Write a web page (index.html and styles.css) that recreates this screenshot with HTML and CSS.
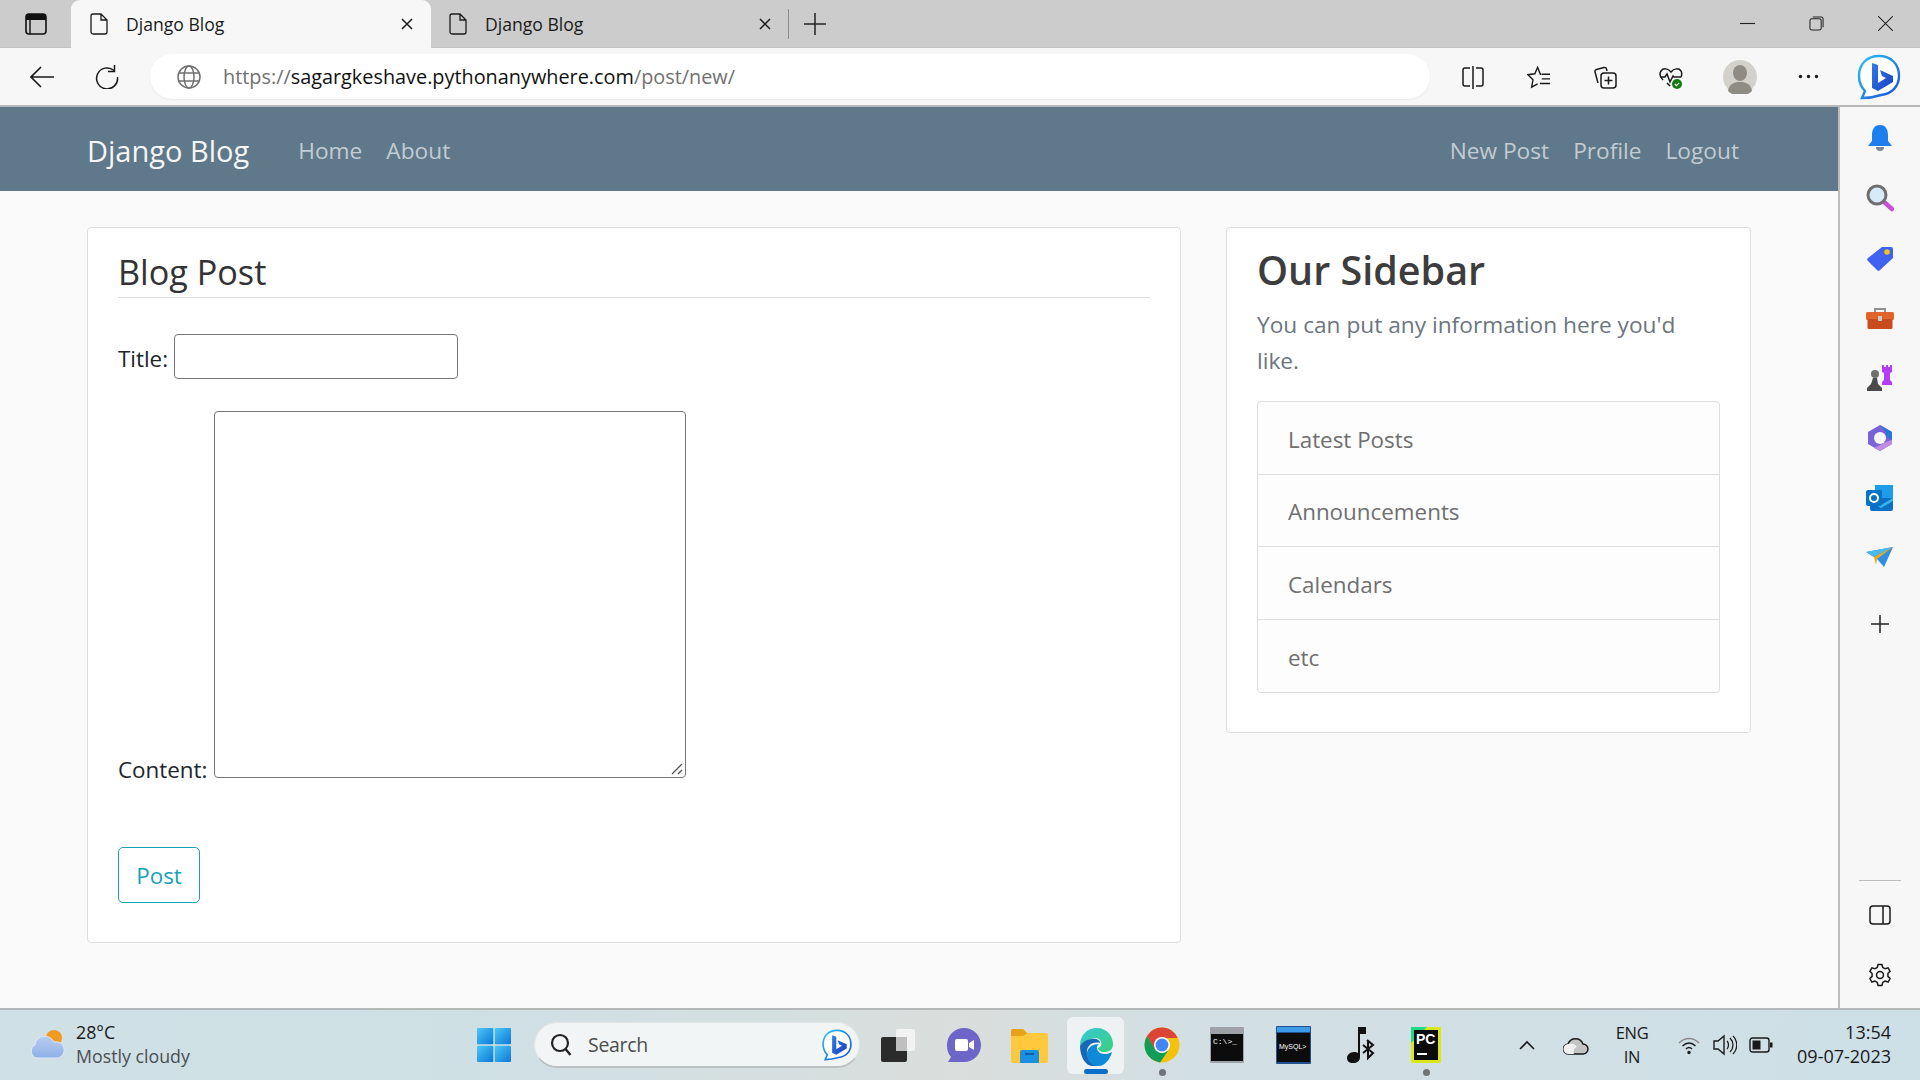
FILE: index.html
```html
<!DOCTYPE html>
<html lang="en">
<head>
<meta charset="utf-8">
<title>Django Blog</title>
<link rel="stylesheet" href="styles.css">
</head>
<body>
<svg class="defs" width="0" height="0">
  <defs>
    <linearGradient id="bingG" x1="0" y1="0" x2="1" y2="1"><stop offset="0" stop-color="#2cc4f0"/><stop offset="1" stop-color="#1a4fd8"/></linearGradient>
    <linearGradient id="bingB" x1="0" y1="0" x2="1" y2="1"><stop offset="0" stop-color="#2f7bea"/><stop offset="1" stop-color="#1b3fc4"/></linearGradient>
    <linearGradient id="edgeG" x1="0" y1="0" x2="1" y2="1"><stop offset="0" stop-color="#36c8d8"/><stop offset="1" stop-color="#3ad07c"/></linearGradient>
    <linearGradient id="winG" x1="0" y1="0" x2="1" y2="1"><stop offset="0" stop-color="#4cc8f5"/><stop offset="1" stop-color="#0a78d8"/></linearGradient>
    <linearGradient id="cloudG" x1="0" y1="0" x2="0" y2="1"><stop offset="0" stop-color="#b8cdf0"/><stop offset="1" stop-color="#8eb0e6"/></linearGradient>
    <symbol id="bing" viewBox="0 0 46 46">
      <path d="M23 2C11 2 3 10 3 22c0 7 3 12 6 15l-3 7c7 0 13-1 19-3 11-1 18-9 18-19C43 10 35 2 23 2Z" fill="#fff" stroke="url(#bingG)" stroke-width="2.4"/>
      <path d="M16 9l6 2v18l8-5-4-2-2-6 13 6v6l-15 9-6-3Z" fill="url(#bingB)"/>
    </symbol>
    <symbol id="doc" viewBox="0 0 18 22">
      <path d="M3 1h8l6 6v12a2 2 0 0 1-2 2H3a2 2 0 0 1-2-2V3a2 2 0 0 1 2-2Z M11 1v6h6" fill="none" stroke="#1a1a1a" stroke-width="1.3"/>
    </symbol>
    <symbol id="tabx" viewBox="0 0 14 14">
      <path d="M2 2l10 10M12 2 2 12" stroke="#1a1a1a" stroke-width="1.5" fill="none"/>
    </symbol>
  </defs>
</svg>
<div class="screen">
  <header class="tabbar">
    <svg class="ic-tabs" viewBox="0 0 22 22"><rect x="1" y="1" width="20" height="20" rx="3" fill="none" stroke="#111" stroke-width="1.6"/><path d="M1 4a3 3 0 0 1 3-3h14a3 3 0 0 1 3 3v3H1Z" fill="#111"/><path d="M5 7v14" stroke="#111" stroke-width="1.4"/></svg>
    <div class="tab tab-active">
      <svg class="ic-doc"><use href="#doc"/></svg>
      <span class="tab-title">Django Blog</span>
      <svg class="ic-tabx"><use href="#tabx"/></svg>
    </div>
    <div class="tab">
      <svg class="ic-doc"><use href="#doc"/></svg>
      <span class="tab-title">Django Blog</span>
      <svg class="ic-tabx"><use href="#tabx"/></svg>
    </div>
    <span class="tab-sep"></span>
    <svg class="ic-plus" viewBox="0 0 22 22"><path d="M11 0v22M0 11h22" stroke="#222" stroke-width="1.5"/></svg>
    <div class="winctl">
      <svg class="ic-win" viewBox="0 0 16 16"><path d="M0 8h16" stroke="#222" stroke-width="1.2"/></svg>
      <svg class="ic-win" viewBox="0 0 16 16"><rect x="1" y="3" width="12" height="12" rx="2" fill="none" stroke="#222" stroke-width="1.1"/><path d="M4 1h9a2 2 0 0 1 2 2v9" fill="none" stroke="#222" stroke-width="1.1"/></svg>
      <svg class="ic-win" viewBox="0 0 16 16"><path d="M0 0l16 16M16 0 0 16" stroke="#222" stroke-width="1.1"/></svg>
    </div>
  </header>

  <div class="toolbar">
    <svg class="ic-back" viewBox="0 0 24 22"><path d="M24 11H2M11 1 1 11l10 10" fill="none" stroke="#1a1a1a" stroke-width="1.6"/></svg>
    <svg class="ic-reload" viewBox="0 0 24 24"><path d="M19 5.5A10.5 10.5 0 1 0 22.5 12" fill="none" stroke="#1a1a1a" stroke-width="1.5"/><path d="M19.500 0v6.500H13" fill="none" stroke="#1a1a1a" stroke-width="1.5"/></svg>
    <div class="address">
      <svg class="ic-globe" viewBox="0 0 24 24"><g fill="none" stroke="#6f6f6f" stroke-width="1.5"><circle cx="12" cy="12" r="11"/><ellipse cx="12" cy="12" rx="5" ry="11"/><path d="M2 8h20M2 16h20"/></g></svg>
      <span class="url"><span class="url-dim">https://</span>sagargkeshave.pythonanywhere.com<span class="url-dim">/post/new/</span></span>
    </div>
    <div class="tools">
      <svg class="ic-tool" viewBox="0 0 24 24"><path d="M9 3H4a2 2 0 0 0-2 2v14a2 2 0 0 0 2 2h5M15 3h5a2 2 0 0 1 2 2v14a2 2 0 0 1-2 2h-5M12 1v23" fill="none" stroke="#1a1a1a" stroke-width="1.500"/></svg>
      <svg class="ic-tool" viewBox="0 0 26 24"><path d="M15.500 9H14.500L11.500 1.500 8.500 8.500 1 9.500l5.500 5.500L5 23l6.500-3.500" fill="none" stroke="#1a1a1a" stroke-width="1.500"/><path d="M16 9h9M16 14h9M14 19h11" stroke="#1a1a1a" stroke-width="1.500"/></svg>
      <svg class="ic-tool" viewBox="0 0 24 24"><path d="M5 18 2 7a2 2 0 0 1 1.500-2.500L11 2.500a2 2 0 0 1 2.500 1.500l.5 2" fill="none" stroke="#1a1a1a" stroke-width="1.500"/><rect x="8" y="8" width="15" height="15" rx="3" fill="#f7f7f7" stroke="#1a1a1a" stroke-width="1.500"/><path d="M15.500 11.500v8M11.500 15.500h8" stroke="#1a1a1a" stroke-width="1.500"/></svg>
      <svg class="ic-tool" viewBox="0 0 24 24"><path d="M4 15C1 12 0 9 2 6c2-3 7-3 10 1 3-4 8-4 10-1 1 2 1 4 0 6M1 12h5l2-3 3 8 3-6 1 1h7M8 18l3 3" fill="none" stroke="#1a1a1a" stroke-width="1.500"/><circle cx="18" cy="19" r="5" fill="#107c10"/><path d="M15.800 19l1.600 1.600 2.800-2.800" fill="none" stroke="#fff" stroke-width="1.200"/></svg>
      <svg class="ic-avatar" viewBox="0 0 34 34"><circle cx="17" cy="17" r="17" fill="#d3d1cc"/><ellipse cx="17" cy="13" rx="7" ry="8" fill="#8f8b85"/><path d="M5 31c1-7 6-9 12-9s11 2 12 9a17 17 0 0 1-24 0Z" fill="#8f8b85"/></svg>
      <svg class="ic-dots" viewBox="0 0 21 5"><circle cx="2.500" cy="2.500" r="1.700" fill="#1a1a1a"/><circle cx="10.500" cy="2.500" r="1.700" fill="#1a1a1a"/><circle cx="18.500" cy="2.500" r="1.700" fill="#1a1a1a"/></svg>
      <svg class="ic-bing-lg"><use href="#bing"/></svg>
    </div>
  </div>

  <div class="middle">
    <div class="page">
      <nav class="navbar">
        <a class="brand">Django Blog</a>
        <a class="navlink navlink-home">Home</a>
        <a class="navlink">About</a>
        <span class="nav-spacer"></span>
        <a class="navlink">New Post</a>
        <a class="navlink">Profile</a>
        <a class="navlink">Logout</a>
      </nav>
      <main class="content">
        <section class="card card-main">
          <h2 class="legend">Blog Post</h2>
          <p class="field field-title"><label class="lbl">Title:</label><input class="inp" type="text"></p>
          <p class="field field-content"><label class="lbl lbl-content">Content:</label><span class="txt-wrap"><textarea class="txt"></textarea><svg class="grip" viewBox="0 0 12 12"><path d="M1 11 11 1M7 11l4-4" stroke="#555" stroke-width="1.300"/></svg></span></p>
          <button class="btn-post">Post</button>
        </section>
        <aside class="card card-side">
          <h3 class="side-h">Our Sidebar</h3>
          <p class="side-p">You can put any information here you'd like.</p>
          <ul class="list">
            <li class="list-item">Latest Posts</li>
            <li class="list-item">Announcements</li>
            <li class="list-item">Calendars</li>
            <li class="list-item">etc</li>
          </ul>
        </aside>
      </main>
    </div>
    <div class="sidebar">
      <svg class="sb-ic" viewBox="0 0 28 28"><path d="M14 1c6 0 8 5 8 10v6l4 5H2l4-5v-6C6 6 8 1 14 1Z" fill="#1c7ff0"/><path d="M10 23h8a4 4 0 0 1-8 0Z" fill="#7d8a96"/></svg>
      <svg class="sb-ic" viewBox="0 0 28 28"><path d="M17 17l9 8" stroke="#c94fd6" stroke-width="4.500" stroke-linecap="round"/><circle cx="11" cy="11" r="9" fill="#d8eaf8" stroke="#6f6f6f" stroke-width="3"/></svg>
      <svg class="sb-ic" viewBox="0 0 28 28"><path d="M16 3h9a2 2 0 0 1 2 2v9L14 26a2 2 0 0 1-3 0L2 17a2 2 0 0 1 0-3Z" fill="#3f62f0"/><circle cx="21" cy="8" r="2.800" fill="#f2c21a"/></svg>
      <svg class="sb-ic" viewBox="0 0 28 28"><path d="M9 9V5h10V9" fill="none" stroke="#8f8f8f" stroke-width="2"/><rect x="0" y="8" width="28" height="8" rx="1.500" fill="#e0652a"/><rect x="1.500" y="15" width="25" height="10" rx="1.500" fill="#c94d1c"/><rect x="12" y="12" width="4" height="5" fill="#c9c9c9"/></svg>
      <svg class="sb-ic" viewBox="0 0 28 28"><path d="M17 2h2v2h2V2h2v2h2V2h2v7l-2 1v7l2 2v3H17v-3l2-2v-7l-2-1Z" fill="#b63cf0" transform="translate(-1 -1)"/><circle cx="9" cy="10" r="4" fill="#6f6f6f"/><path d="M7 14h4l1 6 4 4v3H1v-3l4-4Z" fill="#4a4a4a"/></svg>
      <svg class="sb-ic" viewBox="0 0 28 28"><path d="M14 1 26 8v12l-12 7-12-7V8Z" fill="#7a62d8"/><path d="M14 1 26 8v8l-6-4V8Z" fill="#2a78d8"/><path d="M26 16v4l-12 7-6-3 12-6Z" fill="#c08ce0"/><circle cx="14" cy="14" r="6" fill="#f7f7f7"/></svg>
      <svg class="sb-ic" viewBox="0 0 28 28"><path d="M9 1h18v14H9Z" fill="#1b9de8"/><path d="M4 14h23v11a2 2 0 0 1-2 2H6a2 2 0 0 1-2-2Z" fill="#0f6fc4"/><path d="M4 14l11 7 12-7v3L15 24 4 17Z" fill="#36b6f0"/><rect x="0" y="6" width="16" height="16" rx="2" fill="#0672c4"/><circle cx="8" cy="14" r="4" fill="none" stroke="#fff" stroke-width="2"/></svg>
      <svg class="sb-ic sb-ic-send" viewBox="0 0 28 28"><path d="M0 8 27 3l-9 20-7-8Z" fill="#2f8fe8"/><path d="M0 8 27 3 8 13Z" fill="#4cb8f0"/><path d="M8 13 27 3 11 15l-1 6Z" fill="#f0a80e"/></svg>
      <svg class="sb-plus" viewBox="0 0 18 18"><path d="M9 0v18M0 9h18" stroke="#222" stroke-width="1.500"/></svg>
      <span class="sb-spacer"></span>
      <span class="sb-line"></span>
      <svg class="sb-panel" viewBox="0 0 22 20"><rect x="1" y="1" width="20" height="18" rx="3" fill="none" stroke="#1a1a1a" stroke-width="1.500"/><path d="M14 1v18" stroke="#1a1a1a" stroke-width="1.500"/></svg>
      <svg class="sb-gear" viewBox="0 0 24 24"><g fill="none" stroke="#1a1a1a" stroke-width="1.500"><circle cx="12" cy="12" r="3.500"/><path d="M10 1.500h4l.7 3 2.400 1.300 3-.9 2 3.500-2.200 2.100v2.900l2.200 2.100-2 3.500-3-.9-2.400 1.300-.7 3h-4l-.7-3-2.400-1.300-3 .9-2-3.500 2.200-2.100v-2.900L1.900 8.400l2-3.500 3 .9 2.400-1.300Z"/></g></svg>
    </div>
  </div>

  <footer class="taskbar">
    <svg class="tb-weather" viewBox="0 0 36 34"><circle cx="25" cy="10" r="8" fill="#f29a1e"/><path d="M8 30a7 7 0 0 1-2-13 10 10 0 0 1 19-3 8 8 0 0 1 4 16Z" fill="url(#cloudG)" stroke="#dfe8f6"/></svg>
    <div class="tb-wtext"><span class="tb-temp">28°C</span><span class="tb-cond">Mostly cloudy</span></div>
    <svg class="tb-win" viewBox="0 0 34 34"><rect width="16.300" height="16.300" rx="1" fill="url(#winG)"/><rect x="17.700" width="16.300" height="16.300" rx="1" fill="url(#winG)"/><rect y="17.700" width="16.300" height="16.300" rx="1" fill="url(#winG)"/><rect x="17.700" y="17.700" width="16.300" height="16.300" rx="1" fill="url(#winG)"/></svg>
    <div class="tb-search">
      <svg class="tb-mag" viewBox="0 0 22 24"><circle cx="10" cy="10" r="8" fill="none" stroke="#222" stroke-width="2.200"/><path d="M15.500 16l5 6" stroke="#222" stroke-width="2.400"/></svg>
      <span class="tb-stext">Search</span>
      <svg class="tb-sbing"><use href="#bing"/></svg>
    </div>
    <svg class="tb-app tb-taskview" viewBox="0 0 36 34"><rect x="16" y="1" width="19" height="22" rx="2" fill="#f2f2f2"/><rect x="1" y="9" width="26" height="25" rx="2" fill="#2b2b2b"/><rect x="16" y="9" width="11" height="14" fill="#bfbfbf"/></svg>
    <svg class="tb-app tb-teams" viewBox="0 0 36 36"><path d="M18 1c9 0 17 7 17 17s-8 17-17 17H2l3-5C2 27 1 23 1 18 1 8 9 1 18 1Z" fill="#6d65c8"/><rect x="9" y="12" width="13" height="12" rx="2" fill="#fff"/><path d="M23 16l5-3v10l-5-3Z" fill="#fff"/></svg>
    <svg class="tb-app tb-folder" viewBox="0 0 38 36"><path d="M1 4a2 2 0 0 1 2-2h10l4 4h19a2 2 0 0 1 2 2v26a2 2 0 0 1-2 2H3a2 2 0 0 1-2-2Z" fill="#ffc83d"/><path d="M1 4a2 2 0 0 1 2-2h10l4 4-4 3H1Z" fill="#e8a21a"/><path d="M10 25a2 2 0 0 1 2-2h15a2 2 0 0 1 2 2v11H10Z" fill="#1b8fe0"/><path d="M15 27h9" stroke="#0c5fa8" stroke-width="2"/></svg>
    <div class="tb-active">
      <svg class="tb-edge" viewBox="0 0 36 40"><path d="M2 19C2 8 9 1 19 1c10 0 16 8 16 16 0 6-4 8-9 8-4 0-6-2-6-4 3-1 4-3 3-6-1-4-6-5-10-3-6 2-9 5-11 7Z" fill="url(#edgeG)"/><path d="M2 19c2-3 5-6 11-7 5-1 9 1 9 4-8-2-14 3-13 11 1 7 7 11 13 11-3 1-5 1-8 1C8 39 2 30 2 19Z" fill="#1768b8"/><path d="M9 27c0-6 5-10 12-10-3 2-3 6 1 9 4 2 9 1 12-1-2 8-8 14-13 14-7 0-12-5-12-12Z" fill="#0f8ad8"/></svg>
      <span class="tb-bar"></span>
    </div>
    <div class="tb-runner tb-chrome">
      <svg class="tb-app-in" viewBox="0 0 36 36"><circle cx="18" cy="18" r="17.500" fill="#f4c20d"/><path d="M18 .5A17.500 17.500 0 0 0 3 9l7.500 13L18 11h15.500A17.500 17.500 0 0 0 18 .5Z" fill="#db4437"/><path d="M3 9A17.500 17.500 0 0 0 16 35.400L24 24H12Z" fill="#0f9d58"/><circle cx="18" cy="18" r="8" fill="#fff"/><circle cx="18" cy="18" r="6.400" fill="#4285f4"/></svg>
      <span class="tb-dot"></span>
    </div>
    <svg class="tb-app tb-term" viewBox="0 0 34 36"><rect width="34" height="36" rx="1" fill="#9ea2a6"/><rect x="1" y="7" width="32" height="27" fill="#0c0c0c"/><text x="3" y="17" class="tb-term-t">C:\&gt;_</text></svg>
    <svg class="tb-app tb-mysql" viewBox="0 0 35 38"><rect width="35" height="38" rx="1" fill="#25508f"/><rect x="1" y="1" width="33" height="5" fill="#3d9be8"/><rect x="1" y="7" width="33" height="29" fill="#0c0c0c"/><text x="3" y="23" class="tb-mysql-t">MySQL&gt;</text></svg>
    <svg class="tb-app tb-music" viewBox="0 0 30 38"><path d="M12 1h2v30c0 4-3 6-7 6s-6-2-6-5 3-6 7-6c2 0 3 0 4 1Z" fill="#111"/><path d="M12 1h8v7h-8Z" fill="#111"/><path d="M21 14l6 5-5 4 5 4-5 5V14M17 19l10 8M17 27l10-8" fill="none" stroke="#111" stroke-width="2"/></svg>
    <div class="tb-runner tb-pc">
      <svg class="tb-app-in" viewBox="0 0 30 36"><rect width="30" height="36" fill="#d8e81c"/><path d="M0 0h16L0 16Z" fill="#21d789"/><rect x="3" y="3" width="24" height="30" fill="#0c0c0c"/><text x="5" y="17" class="tb-pc-t">PC</text><rect x="6" y="26" width="10" height="2" fill="#fff"/></svg>
      <span class="tb-dot tb-dot-pc"></span>
    </div>
    <svg class="tb-chev" viewBox="0 0 16 10"><path d="M1 9l7-7 7 7" fill="none" stroke="#1a1a1a" stroke-width="1.600"/></svg>
    <svg class="tb-cloud" viewBox="0 0 26 20"><path d="M6 19a5 5 0 0 1-1-10 8 8 0 0 1 15 0 5 5 0 0 1 0 10Z" fill="#c4c4c4" stroke="#1a1a1a" stroke-width="1.500"/><path d="M6 19a5 5 0 0 1-1-10 8 8 0 0 1 9 3c-3 1-4 4-3 7Z" fill="#f0f0f0"/></svg>
    <div class="tb-lang"><span>ENG</span><span>IN</span></div>
    <svg class="tb-wifi" viewBox="0 0 22 20"><g fill="none" stroke="#1a1a1a" stroke-width="1.400"><path d="M1 8c6-6 14-6 20 0" stroke="#8a8a8a"/><path d="M4.500 11c4-4 9-4 13 0"/><path d="M8 14c2-2 4-2 6 0"/></g><circle cx="11" cy="17.500" r="1.700" fill="#1a1a1a"/></svg>
    <svg class="tb-vol" viewBox="0 0 24 22"><path d="M1 7h4l6-5v18l-6-5H1Z" fill="none" stroke="#1a1a1a" stroke-width="1.400"/><path d="M14 7c2 2 2 6 0 8M17 4c4 4 4 10 0 14M20 2c5 5 5 13 0 18" fill="none" stroke="#1a1a1a" stroke-width="1.300"/></svg>
    <svg class="tb-bat" viewBox="0 0 24 16"><rect x="1" y="1" width="19" height="14" rx="2.500" fill="none" stroke="#1a1a1a" stroke-width="1.400"/><rect x="3.500" y="3.500" width="8" height="9" fill="#1a1a1a"/><rect x="21" y="5.500" width="2.500" height="5" fill="#1a1a1a"/></svg>
    <div class="tb-clock"><span>13:54</span><span>09-07-2023</span></div>
  </footer>
</div>
</body>
</html>
```
FILE: styles.css
```css
* { box-sizing: border-box; }
html, body { margin: 0; padding: 0; }
body { font-family: "Open Sans", "Noto Sans", sans-serif; color: #212529; overflow: hidden; }
.defs { position: absolute; }
.screen { width: 1920px; height: 1080px; display: flex; flex-direction: column; background: #fafafa; }

/* tab strip */
.tabbar { height: 48px; background: #cccccc; display: flex; align-items: center; flex: none; border-bottom: 1px solid #c2c2c2; }
.ic-tabs { width: 22px; height: 22px; margin-left: 25px; margin-right: 24px; flex: none; }
.tab { width: 360px; height: 48px; padding: 0 17px 0 19px; display: flex; align-items: center; flex: none; }
.tab + .tab { width: 323px; padding-left: 0; padding-right: 0; margin-left: 18px; }
.tab-active { background: #f7f7f7; border-radius: 9px 9px 0 0; }
.ic-doc { width: 18px; height: 22px; flex: none; }
.tab-title { font-size: 17.600px; margin-left: 18px; flex: 1; color: #1a1a1a; }
.ic-tabx { width: 14px; height: 14px; flex: none; }
.tab-sep { width: 1px; height: 30px; background: #8c8c8c; margin-left: 16px; flex: none; }
.ic-plus { width: 22px; height: 22px; margin-left: 15px; flex: none; }
.winctl { margin-left: auto; display: flex; gap: 54px; padding-right: 27px; }
.ic-win { width: 15px; height: 15px; display: block; }

/* toolbar */
.toolbar { height: 59px; flex: none; background: #f7f7f7; display: flex; align-items: center; border-bottom: 2px solid #b8b8b8; }
.ic-back { width: 24px; height: 22px; margin-left: 30px; flex: none; }
.ic-reload { width: 24px; height: 24px; margin-left: 41px; flex: none; }
.address { width: 1280px; height: 45px; margin-left: 31px; background: #fff; border-radius: 23px; display: flex; align-items: center; padding-left: 27px; flex: none; box-shadow: 0 1px 2px rgba(0,0,0,.06); }
.ic-globe { width: 24px; height: 24px; flex: none; }
.url { margin-left: 22px; font-size: 19.850px; color: #111; white-space: nowrap; }
.url-dim { color: #707070; }
.tools { display: flex; align-items: center; margin-left: 31px; }
.ic-tool { width: 24px; height: 24px; margin-right: 42px; flex: none; }
.ic-avatar { width: 34px; height: 34px; margin-left: -2px; flex: none; }
.ic-dots { width: 21px; height: 5px; margin-left: 41px; flex: none; }
.ic-bing-lg { width: 46px; height: 46px; margin-left: 37px; flex: none; }

/* middle */
.middle { flex: 1; display: flex; min-height: 0; }
.page { width: 1838px; flex: none; background: #fafafa; display: flex; flex-direction: column; }
.sidebar { width: 82px; flex: none; background: #f7f7f7; border-left: 2px solid #bdbdbd; display: flex; flex-direction: column; align-items: center; padding-top: 17px; }
.sb-ic { width: 28px; height: 28px; margin-bottom: 32px; flex: none; }
.sb-ic-send { margin-bottom: 43px; }
.sb-plus { width: 18px; height: 18px; flex: none; }
.sb-spacer { flex: 1; }
.sb-line { width: 42px; height: 1px; background: #bdbdbd; margin-bottom: 24px; flex: none; }
.sb-panel { width: 22px; height: 20px; margin-bottom: 38px; flex: none; }
.sb-gear { width: 24px; height: 24px; margin-bottom: 21px; flex: none; }

/* navbar */
.navbar { height: 84px; flex: none; background: #5f788a; display: flex; align-items: center; padding: 2px 99px 0 87px; }
.brand { font-size: 29px; color: #f4f6f7; margin-right: 49px; }
.navlink { font-size: 22.700px; color: #c2ccd3; margin-right: 24px; }
.navlink:last-child { margin-right: 0; }
.nav-spacer { flex: 1; }

/* content */
.content { display: flex; align-items: flex-start; gap: 45px; padding: 36px 0 0 87px; }
.card { background: #fff; border: 1px solid #dedede; border-radius: 4px; }
.card-main { width: 1094px; height: 716px; padding: 16px 30px 0; }
.legend { margin: 0; font-size: 34.200px; font-weight: 400; line-height: 55px; height: 54px; border-bottom: 1px solid #dedede; color: #333; }
.field { margin: 0; display: flex; align-items: flex-end; }
.field-title { margin-top: 36px; height: 45px; }
.field-content { margin-top: 32px; }
.lbl { font-size: 22.400px; color: #212529; margin-right: 6px; line-height: 40px; }
.lbl-content { line-height: 16px; margin-right: 7px; }
.inp { width: 284px; height: 45px; border: 1.500px solid #767676; border-radius: 4px; background: #fff; padding: 0; }
.txt-wrap { position: relative; display: block; width: 472px; height: 367px; }
.txt { width: 100%; height: 100%; border: 1.500px solid #767676; border-radius: 4px; background: #fff; padding: 0; display: block; resize: none; }
.grip { position: absolute; right: 3px; bottom: 3px; width: 12px; height: 12px; }
.btn-post { display: block; margin-top: 69px; width: 82px; height: 56px; border: 1.500px solid #17a2b8; border-radius: 5px; background: #fff; color: #17a2b8; font: inherit; font-size: 22.400px; padding: 0; }

/* side card */
.card-side { width: 525px; height: 506px; padding: 17px 30px 0; }
.side-h { margin: 0; font-size: 39.500px; font-weight: 600; line-height: 50px; color: #3d3d3d; }
.side-p { margin: 12px 0 0; max-width: 440px; font-size: 22.700px; line-height: 36px; color: #6c757d; }
.list { list-style: none; margin: 22px 0 0; padding: 0; border: 1px solid #dedede; border-radius: 4px; width: 463px; background: #fdfdfd; }
.list-item { height: 72.500px; display: flex; align-items: center; padding: 3px 0 0 30px; font-size: 22.400px; color: #6f6f6f; border-bottom: 1px solid #dedede; }
.list-item:last-child { border-bottom: 0; }

/* taskbar */
.taskbar { height: 72px; flex: none; display: flex; align-items: center; position: relative; border-top: 2px solid #b4b8b9; background: linear-gradient(90deg, #cfe0e6 0%, #cfe0e5 25%, #dadedc 50%, #d3dfe2 60%, #cde0e7 100%); font-size: 17px; color: #1a1a1a; }
.tb-weather { width: 36px; height: 34px; margin-left: 29px; flex: none; }
.tb-wtext { display: flex; flex-direction: column; margin: 0 0 2px 11px; width: 152px; line-height: 24px; flex: none; }
.tb-temp { font-size: 17.800px; }
.tb-cond { font-size: 17.800px; color: #4a4f52; }
.tb-win { width: 34px; height: 34px; margin-left: 249px; flex: none; }
.tb-search { width: 326px; height: 46px; margin-left: 23px; background: #f2f5f5; border-radius: 23px; border: 1px solid #e2e5e5; border-bottom: 2px solid #bcc0c1; display: flex; align-items: center; padding-left: 15px; flex: none; }
.tb-mag { width: 22px; height: 24px; flex: none; }
.tb-stext { margin-left: 16px; font-size: 19.500px; letter-spacing: -0.3px; color: #4d4d4d; flex: 1; }
.tb-sbing { width: 32px; height: 32px; margin-right: 6px; flex: none; }
.tb-app { flex: none; }
.tb-taskview { width: 36px; height: 34px; margin-left: 20px; }
.tb-teams { width: 36px; height: 36px; margin-left: 30px; }
.tb-folder { width: 38px; height: 36px; margin-left: 28px; }
.tb-active { width: 57px; height: 57px; margin-left: 19px; background: #eef2f3; border-radius: 6px; display: flex; flex-direction: column; align-items: center; padding-top: 10px; flex: none; position: relative; }
.tb-edge { width: 36px; height: 40px; flex: none; }
.tb-bar { width: 24px; height: 5px; border-radius: 3px; background: #0a6fc8; margin-top: 2px; flex: none; }
.tb-runner { width: 36px; height: 36px; position: relative; flex: none; }
.tb-app-in { width: 100%; height: 100%; display: block; }
.tb-chrome { margin-left: 20px; }
.tb-dot { position: absolute; left: 50%; top: 42px; width: 7px; height: 7px; margin-left: -3.500px; border-radius: 50%; background: #6f7577; }
.tb-term { width: 34px; height: 36px; margin-left: 30px; }
.tb-term-t { font-family: "Liberation Mono", monospace; font-size: 8px; fill: #fff; }
.tb-mysql { width: 35px; height: 38px; margin-left: 32px; }
.tb-mysql-t { font-family: "Liberation Sans", sans-serif; font-size: 7px; fill: #fff; }
.tb-music { width: 30px; height: 38px; margin-left: 35px; }
.tb-pc { width: 30px; margin-left: 35px; }
.tb-pc-t { font-family: "Liberation Sans", sans-serif; font-size: 14px; font-weight: 700; fill: #fff; }
.tb-chev { width: 16px; height: 10px; margin-left: 78px; flex: none; }
.tb-cloud { width: 26px; height: 20px; margin-left: 28px; flex: none; }
.tb-lang { display: flex; flex-direction: column; align-items: center; width: 50px; margin-left: 18px; font-size: 16.500px; letter-spacing: -0.3px; line-height: 24px; flex: none; }
.tb-wifi { width: 22px; height: 20px; margin-left: 21px; flex: none; }
.tb-vol { width: 24px; height: 22px; margin-left: 13px; flex: none; }
.tb-bat { width: 24px; height: 16px; margin-left: 12px; flex: none; }
.tb-clock { margin: 0 0 3px auto; padding-right: 29px; display: flex; flex-direction: column; align-items: flex-end; font-size: 18px; line-height: 24px; flex: none; }
```
